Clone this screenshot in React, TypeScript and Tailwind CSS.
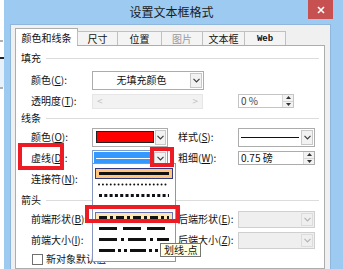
import React from 'react'

const font = "font-['Noto_Sans_CJK_SC','Noto_Sans',sans-serif]"

function Chevron({ color = '#3c3c3c' }: { color?: string }) {
  return (
    <svg width="7" height="5" viewBox="0 0 7 5">
      <path d="M0.5 0.8 L3.5 3.8 L6.5 0.8" fill="none" stroke={color} strokeWidth="1.2" />
    </svg>
  )
}

function ArrowBox({ disabled, className = '' }: { disabled?: boolean; className?: string }) {
  return (
    <div
      className={`w-[12px] self-stretch my-[1px] mr-[1px] flex items-center justify-center border ${
        disabled ? 'border-[#dcdcdc] bg-[#efefef]' : 'border-[#c8c8c8] bg-[#f2f2f2]'
      } ${className}`}
    >
      <Chevron color={disabled ? '#b4b4b4' : '#3c3c3c'} />
    </div>
  )
}

function SpinBox() {
  return (
    <div className="w-[11px] self-stretch flex flex-col border-l border-[#d6d6d6]">
      <div className="flex-1 flex items-center justify-center bg-[#f2f2f2] border-b border-[#d6d6d6]">
        <svg width="5" height="3" viewBox="0 0 5 3">
          <path d="M0 3 L2.5 0 L5 3 Z" fill="#333" />
        </svg>
      </div>
      <div className="flex-1 flex items-center justify-center bg-[#f2f2f2]">
        <svg width="5" height="3" viewBox="0 0 5 3">
          <path d="M0 0 L2.5 3 L5 0 Z" fill="#333" />
        </svg>
      </div>
    </div>
  )
}

function Label({ t, k, className = '' }: { t: string; k: string; className?: string }) {
  return (
    <span className={`whitespace-nowrap ${className}`}>
      {t}(<span className="underline underline-offset-1">{k}</span>):
    </span>
  )
}

function Section({ t, className = '' }: { t: string; className?: string }) {
  return (
    <div className={`flex items-center pl-[5px] pr-[5px] ${className}`}>
      <span>{t}</span>
      <div className="flex-1 h-px bg-[#dcdcdc] ml-[5px]" />
    </div>
  )
}

function DashLine({ dash, width = 3, cap = 'butt' }: { dash?: string; width?: number; cap?: 'butt' | 'round' }) {
  return (
    <svg width="72" height="5" viewBox="0 0 72 5">
      <line x1="1" y1="2.5" x2="71" y2="2.5" stroke="#111" strokeWidth={width} strokeDasharray={dash} strokeLinecap={cap} />
    </svg>
  )
}

const items: { dash?: string; width?: number; cap?: 'butt' | 'round'; hl?: 'strong' | 'soft' }[] = [
  { hl: 'strong' },
  { dash: '0.01 3.9', width: 2, cap: 'round' },
  { dash: '3 2.3' },
  { dash: '8 4' },
  { dash: '8 3 3 3', hl: 'soft' },
  { dash: '18 6' },
  { dash: '18 4 3 4' },
  { dash: '16 3 3 3 3 3' },
]

export default function App() {
  return (
    <div className={`relative w-[343px] h-[269px] overflow-hidden flex bg-white text-[10px] leading-[12px] text-[#111] ${font}`}>
      {/* sliver of the window behind */}
      <div className="w-[4px] shrink-0 flex flex-col bg-white">
        <div className="h-[40px]" />
        <div className="h-[2px] w-[3px] bg-[#b0b0b0]" />
        <div className="h-[15px]" />
        <div className="h-[2px] w-[4px] bg-[#222]" />
        <div className="h-[28px] bg-[#e6f1fb]" />
        <div className="h-[2px] w-[3px] bg-[#b0b0b0]" />
      </div>

      {/* dialog window */}
      <div className="flex-1 flex flex-col bg-[#9ccaf1]">
        <div className="h-[24px] shrink-0 relative flex items-center justify-center pr-[4px]">
          <span className="text-[12px] leading-[14px] text-[#1b1b1b]">设置文本框格式</span>
          <div className="absolute right-[10px] top-0 w-[25px] h-[19px] bg-[#c75050] flex items-center justify-center">
            <svg width="8" height="8" viewBox="0 0 8 8">
              <path d="M1 1 L7 7 M7 1 L1 7" stroke="#fff" strokeWidth="1.6" />
            </svg>
          </div>
        </div>

        <div className="flex-1 ml-[6px] mr-[12px] bg-[#f0f0f0] border-l border-t border-r border-[#8fb6dc] pl-[4px] pr-[5px] pt-[3px] flex flex-col">
          {/* tabs */}
          <div className="h-[17px] flex items-end relative z-10">
            <div className="w-[63px] h-[18px] -mb-px bg-white border-l border-t border-r border-[#adadad] flex items-center justify-center">
              颜色和线条
            </div>
            <div className="w-[41px] -ml-px h-[14px] bg-[#f4f4f4] border-l border-t border-r border-[#c0c0c0] flex items-center justify-center">
              尺寸
            </div>
            <div className="w-[45px] -ml-px h-[14px] bg-[#f4f4f4] border-l border-t border-r border-[#c0c0c0] flex items-center justify-center">
              位置
            </div>
            <div className="w-[42px] -ml-px h-[14px] bg-[#f4f4f4] border-l border-t border-r border-[#c0c0c0] flex items-center justify-center text-[#9a9a9a]">
              图片
            </div>
            <div className="w-[43px] -ml-px h-[14px] bg-[#f4f4f4] border-l border-t border-r border-[#c0c0c0] flex items-center justify-center">
              文本框
            </div>
            <div className="w-[42px] -ml-px h-[14px] bg-[#f4f4f4] border-l border-t border-r border-[#c0c0c0] flex items-center justify-center font-['Liberation_Mono',monospace] font-bold text-[9px]">
              Web
            </div>
          </div>

          {/* panel */}
          <div className="flex-1 bg-white border border-[#adadad] pt-[2px] flex flex-col">
            <Section t="填充" className="h-[20px]" />

            <div className="h-[22px] mt-[1px] flex items-center pl-[15px]">
              <Label t="颜色" k="C" className="w-[61px]" />
              <div className="w-[112px] h-[19px] flex border border-[#acacac] bg-white">
                <div className="flex-1 flex items-center justify-center">无填充颜色</div>
                <ArrowBox />
              </div>
            </div>

            <div className="h-[20px] flex items-center pl-[15px]">
              <Label t="透明度" k="T" className="w-[61px]" />
              <div className="w-[111px] h-[15px] flex items-center justify-between px-[4px] bg-[#f2f2f2] border border-[#e6e6e6] text-[#c2c2c2]">
                <span>&lt;</span>
                <span>&gt;</span>
              </div>
              <div className="ml-[35px] w-[56px] h-[14px] flex border border-[#c4c4c4] bg-white">
                <div className="flex-1 pl-[2px] flex items-center text-[#444]">0 %</div>
                <SpinBox />
              </div>
            </div>

            <Section t="线条" className="h-[14px]" />

            <div className="h-[20px] mt-[2px] flex items-center pl-[15px]">
              <Label t="颜色" k="O" className="w-[61px]" />
              <div className="w-[76px] h-[19px] flex border border-[#acacac] bg-white">
                <div className="flex-1 flex items-center pl-[3px] pr-[1px]">
                  <div className="w-[58px] h-[12px] bg-[#ff0000] border border-[#222]" />
                </div>
                <ArrowBox />
              </div>
              <Label t="样式" k="S" className="ml-[10px] w-[60px]" />
              <div className="w-[77px] h-[19px] flex border border-[#acacac] bg-white">
                <div className="flex-1 flex items-center pl-[2px] pr-[2px]">
                  <div className="w-full h-px bg-[#111]" />
                </div>
                <ArrowBox />
              </div>
            </div>

            <div className="h-[20px] mt-[1px] flex items-center pl-[15px]">
              <Label t="虚线" k="D" className="w-[61px]" />
              <div className="w-[76px] h-[16px] flex border border-[#7a9cd3] bg-white">
                <div className="flex-1 flex items-center bg-[#3399ff] m-px px-[2px]">
                  <div className="w-full h-px bg-white" />
                </div>
                <ArrowBox className="bg-[#e5f1fb]" />
              </div>
              <Label t="粗细" k="W" className="ml-[10px] w-[60px]" />
              <div className="w-[77px] h-[14px] flex border border-[#acacac] bg-white">
                <div className="flex-1 pl-[2px] flex items-center">0.75 磅</div>
                <SpinBox />
              </div>
            </div>

            <div className="h-[20px] mt-[1px] flex items-center pl-[15px]">
              <Label t="连接符" k="N" className="w-[61px]" />
            </div>

            <Section t="箭头" className="h-[20px] mt-[1px]" />

            <div className="h-[18px] flex items-center pl-[15px]">
              <Label t="前端形状" k="B" className="w-[61px]" />
              <div className="w-[76px]" />
              <Label t="后端形状" k="E" className="ml-[10px] w-[60px]" />
              <div className="w-[77px] h-[17px] flex border border-[#cfcfcf] bg-[#efefef]">
                <div className="flex-1" />
                <ArrowBox disabled />
              </div>
            </div>

            <div className="h-[20px] mt-[2px] flex items-center pl-[15px]">
              <Label t="前端大小" k="I" className="w-[61px]" />
              <div className="w-[76px]" />
              <Label t="后端大小" k="Z" className="ml-[10px] w-[60px]" />
              <div className="w-[77px] h-[17px] flex border border-[#cfcfcf] bg-[#efefef]">
                <div className="flex-1" />
                <ArrowBox disabled />
              </div>
            </div>

            <div className="h-[18px] flex items-center pl-[16px]">
              <div className="w-[11px] h-[11px] border border-[#707070] bg-white mr-[3px]" />
              <span>新对象默认值</span>
            </div>
          </div>
        </div>
      </div>

      {/* open dash-type dropdown list */}
      <div className="absolute left-[92px] top-[163px] w-[84px] h-[99px] bg-white border border-[#8796c0] pl-[2px] pt-[4px] flex flex-col">
        {items.map((it, i) => (
          <div
            key={i}
            className={`h-[11px] w-[78px] flex items-center justify-center border ${
              it.hl === 'strong'
                ? 'bg-[#ffc67f] border-[#33397e]'
                : it.hl === 'soft'
                ? 'bg-[#fde6b6] border-[#6a74b4]'
                : 'border-transparent'
            }`}
          >
            <DashLine dash={it.dash} width={it.width} cap={it.cap} />
          </div>
        ))}
      </div>

      {/* red highlight boxes */}
      <div className="absolute left-[18px] top-[143px] w-[46px] h-[27px] border-[4px] border-[#ed1c24]" />
      <div className="absolute left-[150px] top-[147px] w-[24px] h-[20px] border-[4px] border-[#ed1c24]" />
      <div className="absolute left-[85px] top-[205px] w-[95px] h-[18px] border-[4px] border-[#ed1c24]" />

      {/* tooltip */}
      <div className="absolute left-[160px] top-[243px] h-[14px] px-[3px] flex items-center bg-[#ffffe1] border border-[#767676] text-[10px]">
        划线-点
      </div>
    </div>
  )
}
